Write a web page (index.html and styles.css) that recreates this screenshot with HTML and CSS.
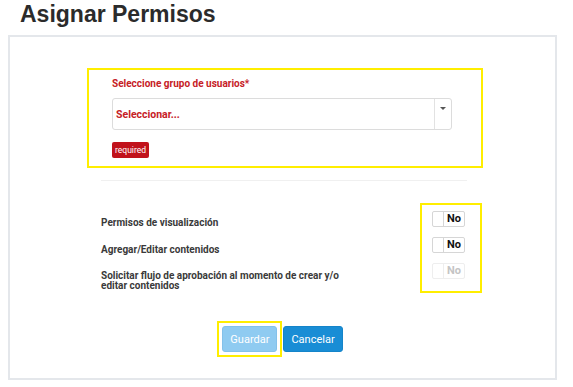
FILE: index.html
```html
<!DOCTYPE html>
<html lang="es">
<head>
    <meta charset="UTF-8">
    <meta name="viewport" content="width=device-width, initial-scale=1.0">
    <title>Asignar Permisos</title>
    <link rel="stylesheet" href="styles.css">
</head>
<body>
    <h1 class="page-title">Asignar Permisos</h1>
    <div class="card">
        <div class="group-field highlight">
            <label class="group-label" for="grupo">Seleccione grupo de usuarios*</label>
            <div class="select-box" id="grupo">
                <span class="select-value">Seleccionar...</span>
                <span class="select-arrow"></span>
            </div>
            <span class="badge-required">required</span>
        </div>

        <hr class="divider">

        <div class="perms">
            <div class="perm-labels">
                <div class="perm-label">Permisos de visualización</div>
                <div class="perm-label">Agregar/Editar contenidos</div>
                <div class="perm-label">Solicitar flujo de aprobación al momento de crear y/o editar contenidos</div>
            </div>
            <div class="perm-toggles highlight">
                <div class="toggle"><span class="toggle-knob"></span><span class="toggle-text">No</span></div>
                <div class="toggle"><span class="toggle-knob"></span><span class="toggle-text">No</span></div>
                <div class="toggle disabled"><span class="toggle-knob"></span><span class="toggle-text">No</span></div>
            </div>
        </div>

        <div class="actions">
            <button class="btn btn-save" disabled>Guardar</button>
            <button class="btn btn-cancel">Cancelar</button>
        </div>
    </div>
</body>
</html>
```

FILE: styles.css
```css
body {
    margin: 0 8px;
    background-color: #fff;
    font-family: Roboto, "Liberation Sans", Arial, sans-serif;
}

.page-title {
    margin: 0 0 7px 12px;
    font-family: "Liberation Sans", Arial, sans-serif;
    font-size: 23px;
    line-height: 28px;
    font-weight: bold;
    color: #2b2b2b;
}

.card {
    margin-right: 8px;
    border: 2px solid #e4e7eb;
    padding: 33px 0 26px 0;
}

.highlight {
    outline: 2px solid #ffee00;
}

.group-field {
    width: 340px;
    margin-left: 79px;
    padding: 8px 29px 8px 23px;
    display: flex;
    flex-direction: column;
    align-items: flex-start;
}

.group-label {
    font-size: 10px;
    line-height: 12px;
    font-weight: bold;
    color: #c62026;
}

.select-box {
    margin-top: 8px;
    width: 100%;
    height: 32px;
    box-sizing: border-box;
    border: 1px solid #dcdcdc;
    border-radius: 3px;
    display: flex;
    align-items: center;
}

.select-value {
    flex: 1;
    padding-left: 3px;
    font-size: 10.5px;
    font-weight: bold;
    color: #c62026;
}

.select-arrow {
    align-self: stretch;
    width: 16px;
    border-left: 1px solid #e2e2e2;
    position: relative;
}

.select-arrow::after {
    content: "";
    position: absolute;
    top: 8px;
    left: 5px;
    border-left: 3px solid transparent;
    border-right: 3px solid transparent;
    border-top: 3px solid #555;
}

.badge-required {
    margin-top: 12px;
    background-color: #c1121b;
    color: #fff;
    font-size: 8.5px;
    line-height: 16px;
    padding: 0 3px;
    border-radius: 2px;
}

.divider {
    margin: 14px 88px 0 91px;
    border: none;
    border-top: 1px solid #f0f0f0;
}

.perms {
    display: flex;
    margin-top: 24px;
    margin-left: 91px;
}

.perm-labels {
    width: 321px;
    padding-top: 13px;
    display: flex;
    flex-direction: column;
    gap: 16.5px;
}

.perm-label {
    max-width: 245px;
    font-size: 10px;
    line-height: 10px;
    font-weight: bold;
    color: #3a3a3a;
}

.perm-toggles {
    width: 48px;
    padding: 6px 0 10px 10px;
    display: flex;
    flex-direction: column;
    gap: 10px;
}

.toggle {
    width: 33px;
    height: 16px;
    box-sizing: border-box;
    border: 1px solid #d6d6d6;
    border-radius: 2px;
    display: flex;
}

.toggle-knob {
    width: 10px;
    border-right: 1px solid #d6d6d6;
}

.toggle-text {
    flex: 1;
    text-align: center;
    font-size: 11px;
    line-height: 14px;
    font-weight: bold;
    color: #111;
}

.toggle.disabled {
    border-color: #eee;
}

.toggle.disabled .toggle-knob {
    border-right-color: #eee;
}

.toggle.disabled .toggle-text {
    color: #c4c4c4;
}

.actions {
    margin-top: 35px;
    display: flex;
    justify-content: center;
    gap: 6px;
}

.btn {
    height: 26px;
    padding: 0 7px;
    border-radius: 3px;
    border: 1px solid transparent;
    font-family: Roboto, Arial, sans-serif;
    font-size: 11px;
    color: #fff;
}

.btn-save {
    position: relative;
    background-color: #8fcbf1;
    border-color: #84c1ea;
}

/* yellow focus frame around the save button */
.btn-save::after {
    content: "";
    position: absolute;
    top: -6px;
    right: -6px;
    bottom: -6px;
    left: -6px;
    border: 2px solid #ffee00;
}

.btn-cancel {
    background-color: #198dd5;
    border-color: #1584c9;
}
```
